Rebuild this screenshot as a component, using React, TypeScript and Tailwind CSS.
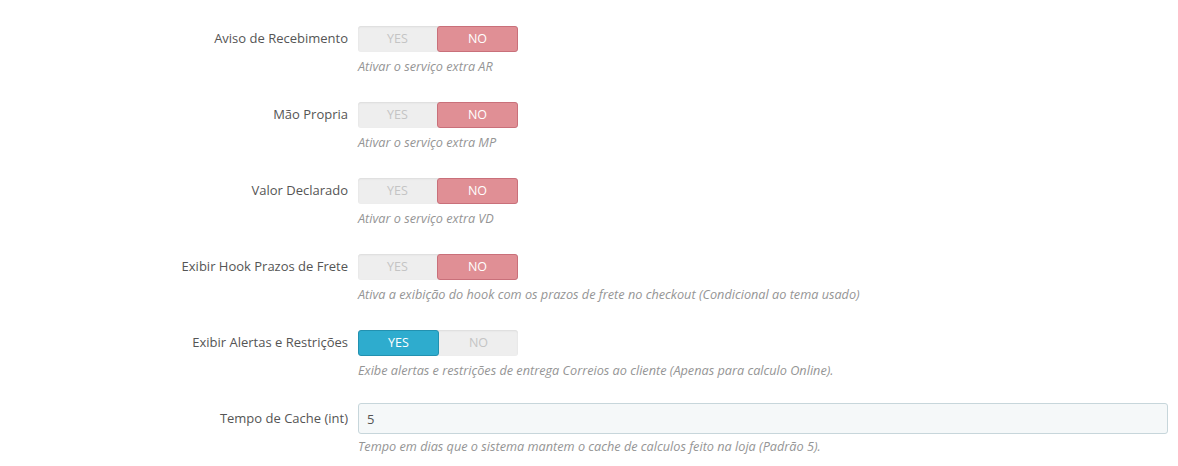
import { useState } from 'react';

type Row = {
  label: string;
  help: string;
  value: boolean;
};

const rows: Row[] = [
  { label: 'Aviso de Recebimento', help: 'Ativar o serviço extra AR', value: false },
  { label: 'Mão Propria', help: 'Ativar o serviço extra MP', value: false },
  { label: 'Valor Declarado', help: 'Ativar o serviço extra VD', value: false },
  {
    label: 'Exibir Hook Prazos de Frete',
    help: 'Ativa a exibição do hook com os prazos de frete no checkout (Condicional ao tema usado)',
    value: false,
  },
  {
    label: 'Exibir Alertas e Restrições',
    help: 'Exibe alertas e restrições de entrega Correios ao cliente (Apenas para calculo Online).',
    value: true,
  },
];

function Switch({ initial }: { initial: boolean }) {
  const [on, setOn] = useState(initial);
  return (
    <div className="flex h-[26px] w-[160px] rounded-[3px] bg-[#eeeeee] shadow-[inset_0_1px_2px_rgba(0,0,0,0.08)] text-[12.5px] leading-none">
      <button
        onClick={() => setOn(true)}
        className={
          on
            ? 'flex-1 rounded-[3px] border border-[#2291b0] bg-[#2eacce] text-white'
            : 'flex-1 text-[#c4c4c4]'
        }
      >
        YES
      </button>
      <button
        onClick={() => setOn(false)}
        className={
          !on
            ? 'flex-1 rounded-[3px] border border-[#c9707a] bg-[#e08f95] text-white'
            : 'flex-1 text-[#c4c4c4]'
        }
      >
        NO
      </button>
    </div>
  );
}

export default function App() {
  return (
    <div
      className="w-[1178px] h-[466px] bg-white pt-[26px] pr-[10px] text-[13px] text-[#555555]"
      style={{ fontFamily: '"Open Sans", "Liberation Sans", sans-serif' }}
    >
      {rows.map((r, i) => (
        <div key={r.label} className={i === rows.length - 1 ? 'flex mb-[24px]' : 'flex mb-[27px]'}>
          <div className="w-[348px] h-[26px] flex items-center justify-end">{r.label}</div>
          <div className="ml-[10px]">
            <Switch initial={r.value} />
            <p className="mt-[5px] text-[12.7px] leading-[18px] italic text-[#959595]">{r.help}</p>
          </div>
        </div>
      ))}
      <div className="flex">
        <div className="w-[348px] h-[31px] flex items-center justify-end">Tempo de Cache (int)</div>
        <div className="ml-[10px] flex-1">
          <input
            defaultValue="5"
            className="block w-full h-[31px] rounded-[3px] border border-[#c7d6db] bg-[#f5f8f9] px-[8px] text-[13px] text-[#555555] outline-none"
          />
          <p className="mt-[3px] text-[12.7px] leading-[18px] italic text-[#959595]">
            Tempo em dias que o sistema mantem o cache de calculos feito na loja (Padrão 5).
          </p>
        </div>
      </div>
    </div>
  );
}
